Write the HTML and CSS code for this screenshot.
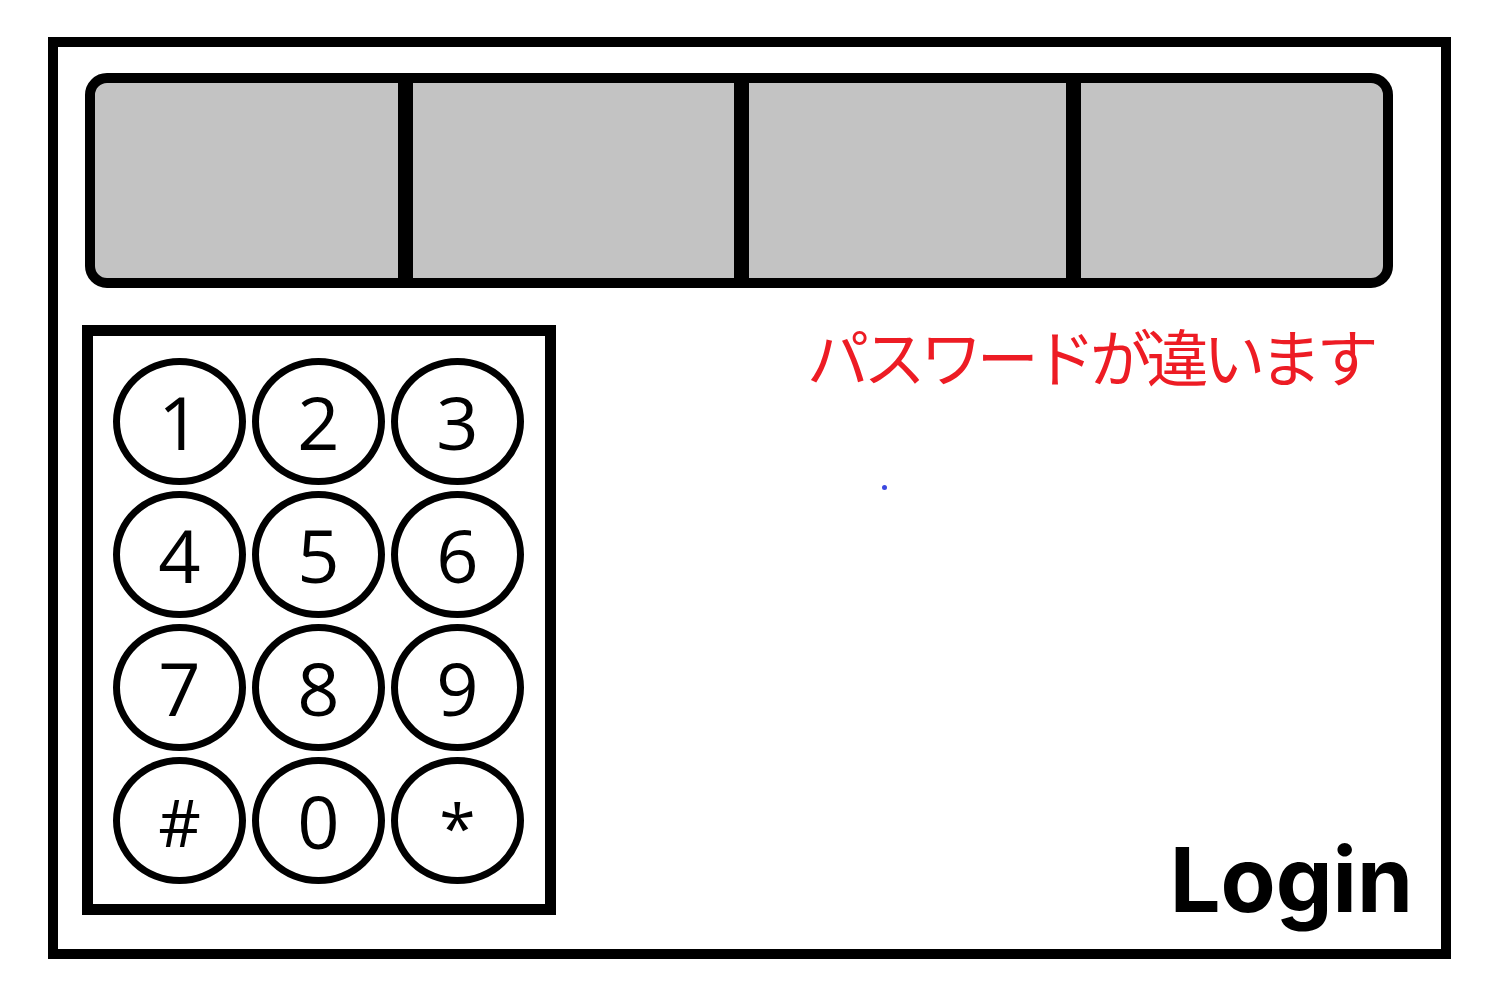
FILE: index.html
```html
<!DOCTYPE html>
<html lang="ja">
<head>
    <meta charset="UTF-8">
    <title>Login</title>
    <link rel="stylesheet" href="styles.css">
</head>
<body>
    <div class="frame">
        <!-- password slots -->
        <div class="slots">
            <div class="slot slot-1"></div>
            <div class="divider"></div>
            <div class="slot slot-2"></div>
            <div class="divider"></div>
            <div class="slot slot-3"></div>
            <div class="divider"></div>
            <div class="slot slot-4"></div>
        </div>
        <div class="lower">
            <div class="keypad">
                <div class="key">1</div>
                <div class="key">2</div>
                <div class="key">3</div>
                <div class="key">4</div>
                <div class="key">5</div>
                <div class="key">6</div>
                <div class="key">7</div>
                <div class="key">8</div>
                <div class="key">9</div>
                <div class="key key-hash">#</div>
                <div class="key">0</div>
                <div class="key key-star">*</div>
            </div>
            <div class="side">
                <div class="message">パスワードが違います</div>
                <div class="dot"></div>
                <div class="login">Login</div>
            </div>
        </div>
    </div>
</body>
</html>
```

FILE: styles.css
```css
body {
    margin: 0;
    background: #fff;
    font-family: 'Open Sans', sans-serif;
}
.frame {
    box-sizing: border-box;
    width: 1403px;
    height: 922px;
    margin: 37px 0 0 48px;
    border: 10px solid #000;
    padding: 26px 0 0 24px;
}
/* top slot bar */
.slots {
    box-sizing: border-box;
    width: 1308px;
    height: 215px;
    margin-left: 3px;
    border: 10px solid #000;
    border-radius: 22px;
    background: #c3c3c3;
    display: flex;
    overflow: hidden;
}
.slot-1 { width: 303px; }
.slot-2 { width: 321px; }
.slot-3 { width: 317px; }
.slot-4 { flex: 1; }
.divider {
    width: 15px;
    background: #000;
}
.lower {
    display: flex;
    margin-top: 37px;
}
/* keypad */
.keypad {
    box-sizing: border-box;
    width: 474px;
    height: 590px;
    border: 11px solid #000;
    padding: 22px 0 0 20px;
    display: grid;
    grid-template-columns: repeat(3, 133px);
    grid-template-rows: repeat(4, 127px);
    gap: 6px;
}
.key {
    box-sizing: border-box;
    border: 7px solid #000;
    border-radius: 50%;
    display: flex;
    align-items: center;
    justify-content: center;
    font-size: 74px;
    line-height: 1;
    color: #000;
}
.key-hash {
    font-size: 66px;
}
.key-star {
    font-size: 66px;
    padding-top: 10px;
}
/* right side */
.side {
    flex: 1;
    display: flex;
    flex-direction: column;
    padding-right: 28px;
}
.message {
    margin: -2px 0 0 251px;
    font-family: 'Noto Sans CJK JP', sans-serif;
    font-size: 62px;
    letter-spacing: -5.4px;
    line-height: 64px;
    color: #ed1c24;
    white-space: nowrap;
}
.dot {
    width: 5px;
    height: 5px;
    border-radius: 50%;
    background: #3b48e0;
    margin: 98px 0 0 326px;
}
.login {
    margin-top: auto;
    margin-bottom: -10px;
    align-self: flex-end;
    font-family: 'Inter', sans-serif;
    font-weight: 700;
    font-size: 90px;
    line-height: 1;
    color: #000;
}
```
